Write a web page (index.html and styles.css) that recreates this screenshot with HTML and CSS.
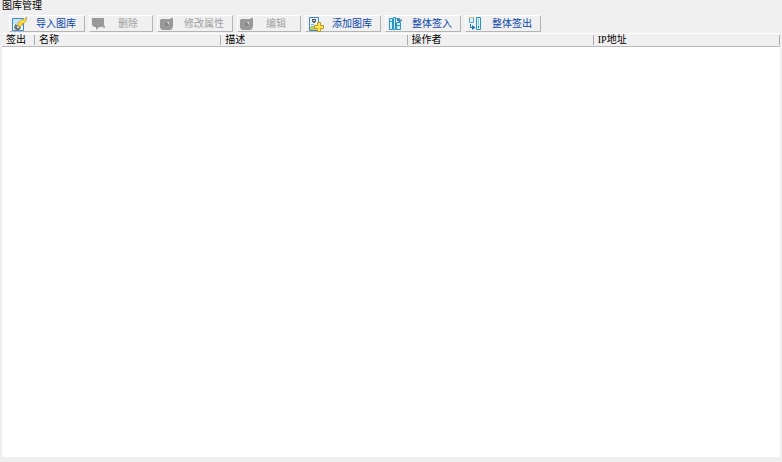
FILE: index.html
```
<!DOCTYPE html>
<html lang="zh-CN">
<head>
<meta charset="utf-8">
<title>图库管理</title>
<link rel="stylesheet" href="styles.css">
</head>
<body>
<main class="window">
  <h1 class="title">图库管理</h1>
  <div class="toolbar" role="toolbar" aria-label="图库操作">
    <button type="button" class="tool">
      <svg class="icon" viewBox="0 0 16 16" aria-hidden="true">
        <path d="M.5 2.500h11v12H.5z" fill="#eef8fc" stroke="#3b8cc4"/>
        <path d="M1 3h10v5H1z" fill="#c4e6f6"/>
        <path d="M3 8l2 1 2-1 1 2 1 2-2 2H4l-2-2z" fill="#66747c"/>
        <path d="M5 10h2v2H5z" fill="#dfe6e8"/>
        <path d="M14.500 1c-1 0-.5 2-2 2.500-2 .3-4.500 0-5.500 3L6 6v5l5-2-2-1c3-.5 6-2 5.500-7z" fill="#ffdc3c" stroke="#a8922a" stroke-width=".6"/>
      </svg>
      <span>导入图库</span>
    </button>
    <button type="button" class="tool compact" disabled>
      <svg class="icon" viewBox="0 0 16 16" aria-hidden="true">
        <path d="M0 2h12v9H7l-3 3v-3H2L0 9z" fill="#999"/>
        <path d="M12 9l1 1v2h-2v-1h-1z" fill="#aaa"/>
      </svg>
      <span>删除</span>
    </button>
    <button type="button" class="tool" disabled>
      <svg class="icon" viewBox="0 0 16 16" aria-hidden="true">
        <path d="M1 3h9l1-1h2v9l-2 3H2l-2-2V4z" fill="#999"/>
        <path d="M5 7h3v2l-1 1H5z" fill="#858585"/>
        <path d="M7 6h2v2H8V7H7z" fill="#d8d8d8"/>
      </svg>
      <span>修改属性</span>
    </button>
    <button type="button" class="tool compact" disabled>
      <svg class="icon" viewBox="0 0 16 16" aria-hidden="true">
        <path d="M1 3h9l1-1h2v9l-2 3H2l-2-2V4z" fill="#999"/>
        <path d="M5 7h3v2l-1 1H5z" fill="#858585"/>
        <path d="M7 6h2v2H8V7H7z" fill="#d8d8d8"/>
      </svg>
      <span>编辑</span>
    </button>
    <button type="button" class="tool">
      <svg class="icon" viewBox="0 0 16 16" aria-hidden="true">
        <path d="M1.500 1.500h9v13h-9z" fill="#e4f4fb" stroke="#4a86b4"/>
        <path d="M2 11h6v3H2z" fill="#b9cf5d"/>
        <path d="M4 3h4v3H7v1H5V6H4z" fill="#565c60"/>
        <path d="M5 4h2v1H5z" fill="#d5dde0"/>
        <path d="M3 8.500h3M3 10.500h3" stroke="#85b5cf"/>
        <path d="M9.500 6.500h3v3h3v3h-3v3h-3v-3h-3v-3h3z" fill="#ffe548" stroke="#b8962a"/>
      </svg>
      <span>添加图库</span>
    </button>
    <button type="button" class="tool">
      <svg class="icon" viewBox="0 0 16 16" aria-hidden="true">
        <path d="M1.500 2.500h3v11h-3zM5.500 1.500h2v12h-2zM8.500 6.500h4v7h-4z" fill="#c8f0fb" stroke="#2f92c0"/>
        <path d="M2 5.500h2M9 9.500h3" stroke="#2da3d0"/>
        <path d="M8 2.500h3.500V6M9 4h5l-2.500 2z" fill="#2f82b4" stroke="#2f82b4" stroke-width=".7"/>
      </svg>
      <span>整体签入</span>
    </button>
    <button type="button" class="tool">
      <svg class="icon" viewBox="0 0 16 16" aria-hidden="true">
        <path d="M1.500 1.500h4v5h-4z" fill="#d8f1fa" stroke="#5ba4c8"/>
        <path d="M1 1.500h4" stroke="#e4b77a"/>
        <path d="M8.500 1.500h4v12h-4z" fill="#d9f7fd" stroke="#2b91bf"/>
        <path d="M10.500 3v6" stroke="#8bcfe5"/>
        <path d="M10.500 10v2" stroke="#25739d"/>
        <path d="M2.500 8v3.500H5" fill="none" stroke="#1678b0"/>
        <path d="M4 9l3.500 2.500L4 14z" fill="#1678b0"/>
      </svg>
      <span>整体签出</span>
    </button>
  </div>
  <section class="list">
    <table class="grid">
      <thead>
        <tr>
          <th class="check" scope="col">签出</th>
          <th scope="col">名称</th>
          <th scope="col">描述</th>
          <th scope="col">操作者</th>
          <th scope="col">IP地址</th>
        </tr>
      </thead>
      <tbody></tbody>
    </table>
  </section>
</main>
</body>
</html>
```
FILE: styles.css
```
* {
  box-sizing: border-box;
}

body {
  margin: 0;
  background: #efefef;
  color: #000;
  font-family: "Liberation Serif", "Noto Sans CJK SC", serif;
  font-size: 10px;
  line-height: 12px;
}

.window {
  display: flex;
  flex-direction: column;
  min-height: 100vh;
  padding: 0 2px 5px;
}

.title {
  margin: 0;
  padding-bottom: 3px;
  font-size: 10px;
  font-weight: 400;
  line-height: 12px;
}

.toolbar {
  display: flex;
  gap: 4px;
  padding: 0 7px;
}

.tool {
  display: flex;
  align-items: center;
  gap: 8px;
  width: 76px;
  height: 17px;
  padding: 0 0 0 2px;
  border: 1px solid;
  border-color: #fff #b4b4b4 #b4b4b4 #fff;
  background: #f0f0f0;
  color: #0b46a8;
  font: inherit;
  white-space: nowrap;
}

.tool.compact {
  gap: 10px;
  width: 64px;
}

.tool:disabled {
  color: #a0a0a0;
}

.icon {
  flex: none;
  width: 16px;
  height: 16px;
}

.list {
  flex: 1;
  margin-top: 1px;
  background: #fff;
}

.grid {
  width: 100%;
  table-layout: fixed;
  border-collapse: separate;
  border-spacing: 0;
}

.grid th {
  height: 14px;
  padding: 0 0 0 4px;
  border-top: 1px solid #fff;
  border-bottom: 1px solid #b8b8b8;
  background: linear-gradient(#aaa, #aaa) right center / 1px 10px no-repeat #f0f0f0;
  font-weight: 400;
  line-height: 12px;
  text-align: left;
}

.grid .check {
  width: 33px;
}
```
